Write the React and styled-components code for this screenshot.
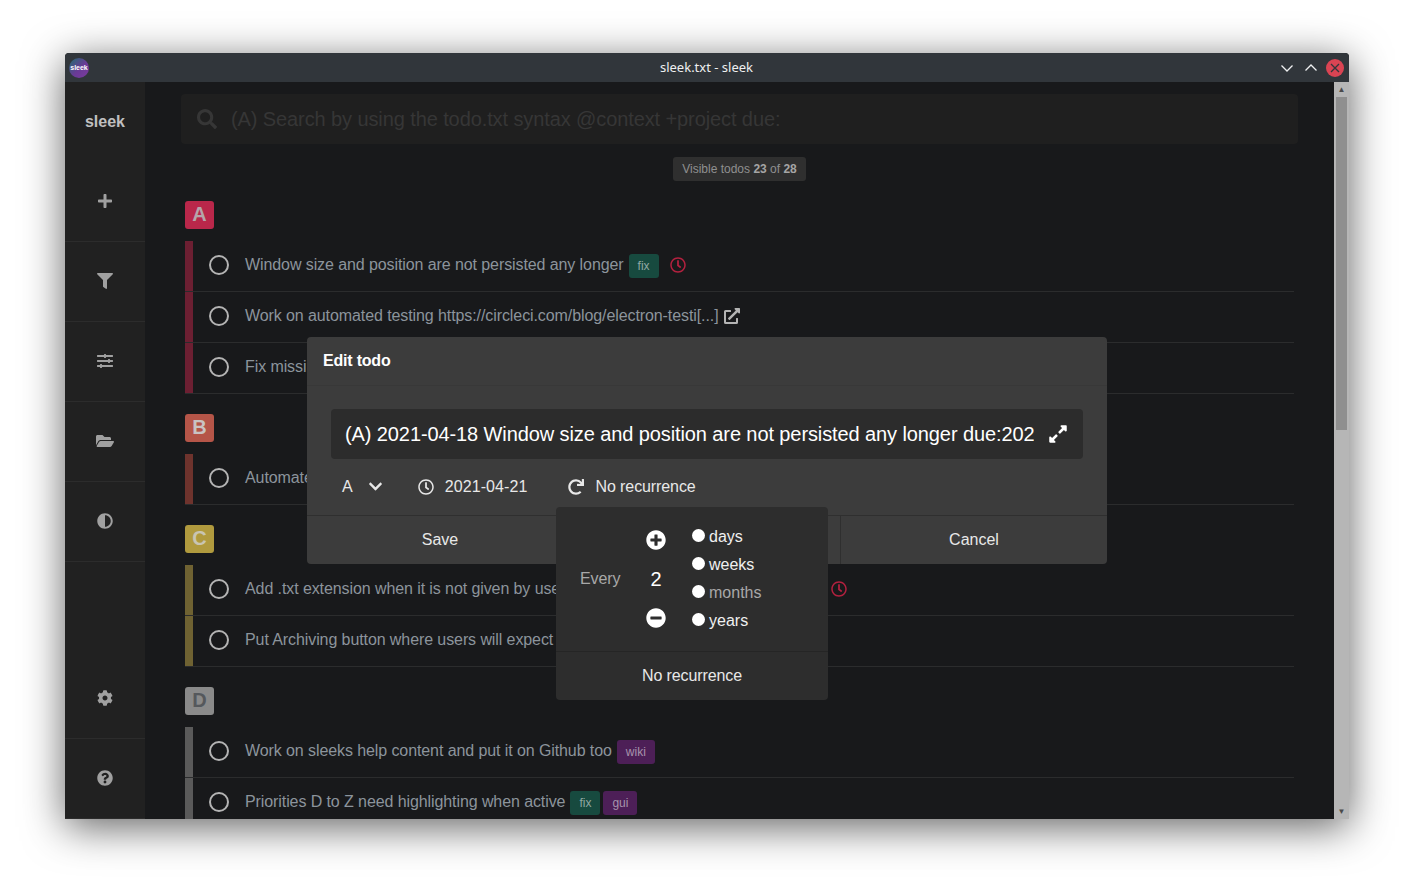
import React from 'react';
import styled, { createGlobalStyle } from 'styled-components';
import {
  FaPlus,
  FaFilter,
  FaSlidersH,
  FaFolderOpen,
  FaAdjust,
  FaCog,
  FaQuestionCircle,
  FaSearch,
  FaExpandAlt,
  FaRegClock,
  FaRedo,
  FaPlusCircle,
  FaMinusCircle,
  FaExternalLinkAlt,
  FaChevronDown,
} from 'react-icons/fa';

const GlobalStyle = createGlobalStyle`
  html, body {
    margin: 0;
    padding: 0;
    background: #fff;
    font-family: "Liberation Sans", Arial, sans-serif;
  }
  * { box-sizing: border-box; }
`;

const Desktop = styled.div`
  width: 1414px;
  height: 896px;
  padding: 53px 65px 77px;
  overflow: hidden;
`;

const Window = styled.div`
  position: relative;
  height: 766px;
  display: flex;
  flex-direction: column;
  border-radius: 4px 4px 0 0;
  overflow: hidden;
  background: #18191b;
`;

const Shadow = styled.div`
  height: 100%;
  border-radius: 4px 4px 0 0;
  box-shadow: 0 8px 42px rgba(0, 0, 0, 0.62);
`;

const TitleBar = styled.div`
  height: 29px;
  flex: none;
  display: grid;
  grid-template-columns: 1fr auto 1fr;
  align-items: center;
  padding: 0 5px 0 4px;
  background: #31363b;
`;

const AppLogo = styled.div`
  width: 20px;
  height: 20px;
  border-radius: 50%;
  display: flex;
  align-items: center;
  justify-content: center;
  background: linear-gradient(135deg, #1f6f6f 0%, #6a3a96 55%, #7c3b9e 100%);
  color: #fff;
  font: bold 7px "Liberation Sans", sans-serif;
`;

const WindowTitle = styled.div`
  color: #eff0f1;
  font: 13px "Noto Sans", sans-serif;
  padding-bottom: 2px;
`;

const WindowButtons = styled.div`
  display: flex;
  align-items: center;
  justify-content: flex-end;
  gap: 6px;
  color: #eff0f1;
`;

const WindowButton = styled.svg`
  width: 18px;
  height: 18px;
`;

const Body = styled.div`
  flex: 1;
  min-height: 0;
  display: flex;
`;

const Sidebar = styled.nav`
  width: 80px;
  flex: none;
  display: flex;
  flex-direction: column;
  background: #212121;
`;

const Brand = styled.div`
  height: 80px;
  flex: none;
  display: flex;
  align-items: center;
  justify-content: center;
  padding-bottom: 1px;
  color: #c0c0c0;
  font: bold 16px "Liberation Sans", sans-serif;
`;

const NavItem = styled.div`
  height: 80px;
  flex: none;
  display: flex;
  align-items: center;
  justify-content: center;
  padding-bottom: 1px;
  border-bottom: 1px solid #2c2c2c;
  color: #a0a0a0;
  font-size: 16px;
  margin-top: ${(p) => (p.$pushed ? 'auto' : '0')};
`;

const Main = styled.main`
  flex: 1;
  min-width: 0;
  padding: 12px 36px 0;
  overflow: hidden;
`;

const Search = styled.div`
  height: 50px;
  display: flex;
  align-items: center;
  gap: 14px;
  padding: 0 16px;
  border-radius: 4px;
  background: #1f1f1f;
  color: #363636;
  font-size: 20px;
  letter-spacing: -0.1px;
  white-space: nowrap;
`;

const CounterRow = styled.div`
  display: flex;
  justify-content: center;
  margin-top: 13px;
`;

const Counter = styled.div`
  height: 24px;
  display: flex;
  align-items: center;
  padding: 0 9px;
  border-radius: 3px;
  background: #2f2f2f;
  color: #8f8f8f;
  font-size: 12px;
  white-space: pre;

  b {
    color: #a5a5a5;
  }
`;

const Group = styled.section`
  padding: 0 4px;
  margin-top: 20px;
`;

const Badge = styled.div`
  width: 29px;
  height: 28px;
  display: flex;
  align-items: center;
  justify-content: center;
  padding-bottom: 2px;
  border-radius: 3px;
  background: ${(p) => p.$color};
  color: ${(p) => p.$text};
  font-weight: 700;
  font-size: 20px;
  margin-bottom: 12px;
`;

const Row = styled.div`
  height: 51px;
  display: flex;
  border-bottom: 1px solid #2b2c2d;
  white-space: nowrap;
  overflow: hidden;
  color: #8c949c;
  font-size: 16px;
  letter-spacing: -0.09px;
`;

const Bar = styled.div`
  width: 8px;
  flex: none;
  background: ${(p) => p.$color};
`;

const RowContent = styled.div`
  flex: 1;
  min-width: 0;
  display: flex;
  align-items: center;
  padding-bottom: 2px;
`;

const Check = styled.span`
  width: 20px;
  height: 20px;
  flex: none;
  margin: 0 16px;
  border: 2px solid #b4b4b4;
  border-radius: 50%;
`;

const Tag = styled.span`
  height: 24px;
  display: inline-flex;
  align-items: center;
  padding: 0 9px;
  margin: 2px 0 0 ${(p) => p.$gap}px;
  border-radius: 3px;
  background: ${(p) => p.$color};
  color: ${(p) => p.$text};
  font-size: 12px;
  letter-spacing: 0;
`;

const Due = styled(FaRegClock)`
  margin-left: 11px;
  color: #b3213f;
  font-size: 16px;
`;

const LinkIcon = styled(FaExternalLinkAlt)`
  margin-left: 5px;
  color: #b4b4b4;
  font-size: 16px;
`;

const ScrollTrack = styled.div`
  width: 15px;
  flex: none;
  display: flex;
  flex-direction: column;
  align-items: center;
  background: #b6b6b6;
`;

const ScrollArrow = styled.div`
  height: 15px;
  flex: none;
  display: flex;
  align-items: center;
  justify-content: center;
  color: #4a4a4a;
  font-size: 8px;
  line-height: 1;
`;

const ScrollSpace = styled.div`
  flex: 1;
  width: 11px;
`;

const ScrollThumb = styled.div`
  height: 333px;
  background: #8f8f8f;
`;

const Modal = styled.div`
  position: absolute;
  left: 242px;
  top: 284px;
  width: 800px;
  height: 227px;
  display: flex;
  flex-direction: column;
  border-radius: 4px;
  background: #3c3c3c;
  color: #e8e8e8;
`;

const ModalHeader = styled.header`
  height: 49px;
  flex: none;
  display: flex;
  align-items: center;
  padding: 0 16px;
  border-bottom: 1px solid #383838;
  color: #fff;
  font-weight: 700;
  font-size: 16px;
  letter-spacing: -0.2px;
`;

const ModalBody = styled.div`
  flex: 1;
  padding: 23px 24px 0;
`;

const TodoField = styled.div`
  position: relative;
`;

const TodoInput = styled.input`
  width: 100%;
  height: 50px;
  padding: 0 49px 0 14px;
  border: 0;
  border-radius: 4px;
  outline: none;
  background: #2c2c2c;
  color: #fff;
  font: 20px "Liberation Sans", sans-serif;
  letter-spacing: -0.1px;
`;

const ExpandIcon = styled(FaExpandAlt)`
  position: absolute;
  right: 15px;
  top: 15px;
  color: #fff;
  font-size: 20px;
`;

const Controls = styled.div`
  height: 55px;
  display: flex;
  align-items: center;
  padding-left: 11px;
  font-size: 16px;
`;

const Control = styled.div`
  display: flex;
  align-items: center;
  gap: ${(p) => p.$gap}px;
  margin-right: ${(p) => p.$after}px;
  letter-spacing: ${(p) => p.$spacing || 0}px;
`;

const ModalFooter = styled.footer`
  height: 49px;
  flex: none;
  display: flex;
  border-top: 1px solid #2f2f2f;
`;

const FooterButton = styled.div`
  flex: 1;
  display: flex;
  align-items: center;
  justify-content: center;
  padding-bottom: 1px;
  border-right: ${(p) => (p.$last ? '0' : '1px solid #2f2f2f')};
  font-size: 16px;
`;

const Popup = styled.div`
  position: absolute;
  left: 491px;
  top: 454px;
  width: 272px;
  height: 193px;
  display: flex;
  flex-direction: column;
  border-radius: 4px;
  background: #2d2d2d;
  color: #e8e8e8;
  font-size: 16px;
`;

const PopupMain = styled.div`
  height: 145px;
  flex: none;
  display: grid;
  grid-template-columns: 77px 46px 1fr;
  align-items: center;
  border-bottom: 1px solid #252525;
`;

const EveryLabel = styled.div`
  padding-left: 24px;
  color: #a8a8a8;
  letter-spacing: -0.1px;
`;

const Stepper = styled.div`
  height: 98px;
  display: flex;
  flex-direction: column;
  align-items: center;
  justify-content: space-between;
  color: #fff;
  font-size: 20px;
  line-height: 1;
`;

const Units = styled.div`
  display: flex;
  flex-direction: column;
  padding-left: 13px;
`;

const Unit = styled.label`
  height: 28px;
  display: flex;
  align-items: center;
  gap: 4px;
  color: ${(p) => (p.$dim ? '#a8a8a8' : '#f0f0f0')};
`;

const Radio = styled.input`
  appearance: none;
  width: 13px;
  height: 13px;
  margin: -4px 0 0;
  border-radius: 50%;
  background: #fff;
`;

const PopupAction = styled.div`
  flex: 1;
  display: flex;
  align-items: center;
  justify-content: center;
  letter-spacing: -0.1px;
`;

const groups = [
  {
    letter: 'A', color: '#b9274a', text: '#b5a5aa', bar: '#6c1f32',
    rows: [
      { text: 'Window size and position are not persisted any longer', tags: ['fix'], due: true },
      { text: 'Work on automated testing https://circleci.com/blog/electron-testi[...]', link: true },
      { text: 'Fix missing translations in the dialogs' },
    ],
  },
  {
    letter: 'B', color: '#b55548', text: '#c9c3c2', bar: '#6e332d',
    rows: [{ text: 'Automate the release builds' }],
  },
  {
    letter: 'C', color: '#b09a3e', text: '#c9c5b2', bar: '#6f6232',
    rows: [
      { text: 'Add .txt extension when it is not given by user on creating a new file or so too', tags: ['fix'], due: true },
      { text: 'Put Archiving button where users will expect it' },
    ],
  },
  {
    letter: 'D', color: '#8a8a8a', text: '#55585c', bar: '#5a5a5a',
    rows: [
      { text: 'Work on sleeks help content and put it on Github too', tags: ['wiki'] },
      { text: 'Priorities D to Z need highlighting when active', tags: ['fix', 'gui'] },
    ],
  },
];

const tagColors = {
  fix: { color: '#174a3f', text: '#8fa8a2' },
  wiki: { color: '#4d1f57', text: '#a793ac' },
  gui: { color: '#4d1f57', text: '#a793ac' },
};

function TodoRow({ row, bar }) {
  return (
    <Row>
      <Bar $color={bar} />
      <RowContent>
        <Check />
        {row.text}
        {row.tags &&
          row.tags.map((tag, i) => (
            <Tag key={tag} $gap={i === 0 ? 5 : 3} $color={tagColors[tag].color} $text={tagColors[tag].text}>
              {tag}
            </Tag>
          ))}
        {row.due && <Due />}
        {row.link && <LinkIcon />}
      </RowContent>
    </Row>
  );
}

function App() {
  return (
    <Desktop>
      <GlobalStyle />
      <Shadow>
        <Window>
          <TitleBar>
            <AppLogo>sleek</AppLogo>
            <WindowTitle>sleek.txt - sleek</WindowTitle>
            <WindowButtons>
              <WindowButton viewBox="0 0 18 18" fill="none" stroke="currentColor" strokeWidth="1.3">
                <path d="M3.5 6.5 9 12l5.500-5.500" />
              </WindowButton>
              <WindowButton viewBox="0 0 18 18" fill="none" stroke="currentColor" strokeWidth="1.3">
                <path d="M3.5 11.500 9 6l5.500 5.500" />
              </WindowButton>
              <WindowButton viewBox="0 0 18 18" fill="none">
                <circle cx="9" cy="9" r="9" fill="#da4453" />
                <path d="M5 5l8 8M13 5l-8 8" stroke="#31363b" strokeWidth="1.3" />
              </WindowButton>
            </WindowButtons>
          </TitleBar>
          <Body>
            <Sidebar>
              <Brand>sleek</Brand>
              <NavItem><FaPlus /></NavItem>
              <NavItem><FaFilter /></NavItem>
              <NavItem><FaSlidersH /></NavItem>
              <NavItem><FaFolderOpen size={18} /></NavItem>
              <NavItem><FaAdjust /></NavItem>
              <NavItem $pushed><FaCog /></NavItem>
              <NavItem><FaQuestionCircle /></NavItem>
            </Sidebar>
            <Main>
              <Search>
                <FaSearch />
                (A) Search by using the todo.txt syntax @context +project due:
              </Search>
              <CounterRow>
                <Counter>
                  Visible todos <b>23</b> of <b>28</b>
                </Counter>
              </CounterRow>
              {groups.map((group) => (
                <Group key={group.letter}>
                  <Badge $color={group.color} $text={group.text}>{group.letter}</Badge>
                  {group.rows.map((row) => (
                    <TodoRow key={row.text} row={row} bar={group.bar} />
                  ))}
                </Group>
              ))}
            </Main>
            <ScrollTrack>
              <ScrollArrow>▲</ScrollArrow>
              <ScrollSpace><ScrollThumb /></ScrollSpace>
              <ScrollArrow>▼</ScrollArrow>
            </ScrollTrack>
          </Body>

          <Modal>
            <ModalHeader>Edit todo</ModalHeader>
            <ModalBody>
              <TodoField>
                <TodoInput
                  readOnly
                  value="(A) 2021-04-18 Window size and position are not persisted any longer due:2021-04-21 rec:2w"
                />
                <ExpandIcon />
              </TodoField>
              <Controls>
                <Control $gap={15} $after={35}>A <FaChevronDown size={15} /></Control>
                <Control $gap={11} $after={40} $spacing={0.1}><FaRegClock />2021-04-21</Control>
                <Control $gap={12} $after={0} $spacing={-0.1}><FaRedo />No recurrence</Control>
              </Controls>
            </ModalBody>
            <ModalFooter>
              <FooterButton>Save</FooterButton>
              <FooterButton>Delete</FooterButton>
              <FooterButton $last>Cancel</FooterButton>
            </ModalFooter>
          </Modal>

          <Popup>
            <PopupMain>
              <EveryLabel>Every</EveryLabel>
              <Stepper>
                <FaPlusCircle />
                2
                <FaMinusCircle />
              </Stepper>
              <Units>
                <Unit><Radio type="radio" name="unit" />days</Unit>
                <Unit><Radio type="radio" name="unit" />weeks</Unit>
                <Unit $dim><Radio type="radio" name="unit" />months</Unit>
                <Unit><Radio type="radio" name="unit" />years</Unit>
              </Units>
            </PopupMain>
            <PopupAction>No recurrence</PopupAction>
          </Popup>
        </Window>
      </Shadow>
    </Desktop>
  );
}

export default App;
